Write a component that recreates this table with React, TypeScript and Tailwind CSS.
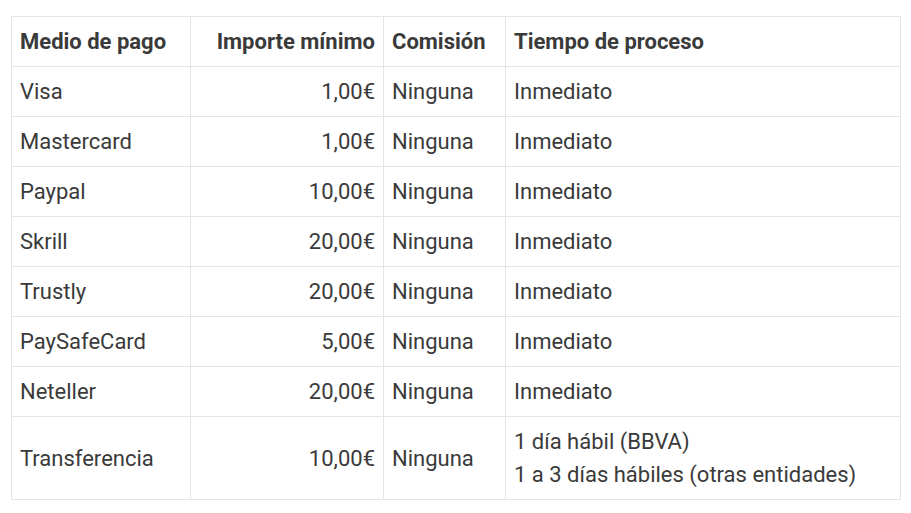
import React from 'react';

const rows = [
  { name: 'Visa', min: '1,00€', fee: 'Ninguna', time: ['Inmediato'] },
  { name: 'Mastercard', min: '1,00€', fee: 'Ninguna', time: ['Inmediato'] },
  { name: 'Paypal', min: '10,00€', fee: 'Ninguna', time: ['Inmediato'] },
  { name: 'Skrill', min: '20,00€', fee: 'Ninguna', time: ['Inmediato'] },
  { name: 'Trustly', min: '20,00€', fee: 'Ninguna', time: ['Inmediato'] },
  { name: 'PaySafeCard', min: '5,00€', fee: 'Ninguna', time: ['Inmediato'] },
  { name: 'Neteller', min: '20,00€', fee: 'Ninguna', time: ['Inmediato'] },
  {
    name: 'Transferencia',
    min: '10,00€',
    fee: 'Ninguna',
    time: ['1 día hábil (BBVA)', '1 a 3 días hábiles (otras entidades)'],
  },
];

export default function App() {
  return (
    <div className="min-h-[513px] bg-white pt-4 pl-[11px] font-['Roboto',sans-serif] text-[22px] leading-[33px] text-[#3a3a3a]">
      <table className="w-[890px] table-fixed border-collapse">
        <colgroup>
          <col className="w-[179px]" />
          <col className="w-[193px]" />
          <col className="w-[122px]" />
          <col />
        </colgroup>
        <thead>
          <tr className="font-bold">
            <th className="border border-[#e4e4e4] px-2 py-2 text-left">Medio de pago</th>
            <th className="border border-[#e4e4e4] px-2 py-2 text-right">Importe mínimo</th>
            <th className="border border-[#e4e4e4] px-2 py-2 text-left">Comisión</th>
            <th className="border border-[#e4e4e4] px-2 py-2 text-left">Tiempo de proceso</th>
          </tr>
        </thead>
        <tbody>
          {rows.map((r) => (
            <tr key={r.name}>
              <td className="border border-[#e4e4e4] px-2 py-2">{r.name}</td>
              <td className="border border-[#e4e4e4] px-2 py-2 text-right">{r.min}</td>
              <td className="border border-[#e4e4e4] px-2 py-2">{r.fee}</td>
              <td className="border border-[#e4e4e4] px-2 py-2">
                {r.time.map((t) => (
                  <div key={t}>{t}</div>
                ))}
              </td>
            </tr>
          ))}
        </tbody>
      </table>
    </div>
  );
}
